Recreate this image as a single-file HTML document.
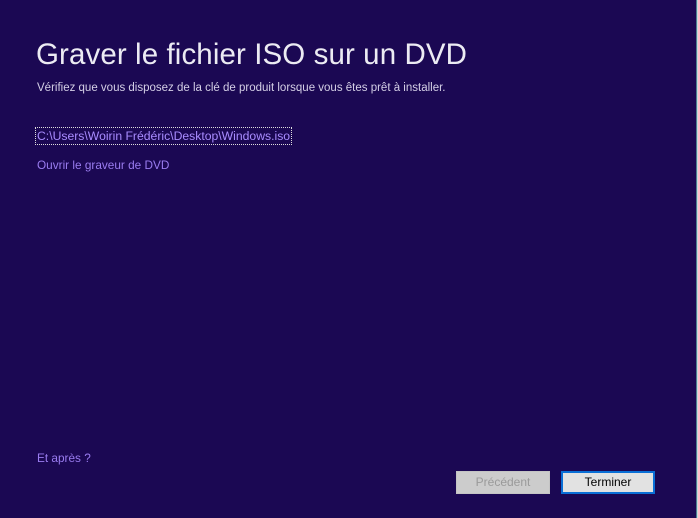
<!DOCTYPE html>
<html><head><meta charset="utf-8"><style>
body{margin:0;width:698px;height:518px;background:#1b0853;position:relative;overflow:hidden;font-family:"Liberation Sans",sans-serif;}
.e{position:absolute;top:0;width:1px;height:518px}
h1{position:absolute;left:36px;top:38px;margin:0;font-weight:300;font-size:29.5px;color:#ecebf3;letter-spacing:0.1px;white-space:nowrap}
.t{position:absolute;white-space:nowrap;font-size:11.8px}
.b{position:absolute;top:471px;width:94px;height:23px;box-sizing:border-box;font-size:12px;text-align:center;line-height:21px}
</style></head><body>
<div class="e" style="left:696px;background:#4a7f8f"></div>
<div class="e" style="left:697px;background:#c8d8dc"></div>
<h1>Graver le fichier ISO sur un DVD</h1>
<div class="t" style="left:37px;top:82px;color:#d4cfe6;font-size:11.5px">Vérifiez que vous disposez de la clé de produit lorsque vous êtes prêt à installer.</div>
<div class="t" style="left:36px;top:128px;color:#a98cff;outline:1px dotted #ddd;padding:1px 1px;font-size:12.2px">C:\Users\Woirin Frédéric\Desktop\Windows.iso</div>
<div class="t" style="left:37px;top:158px;color:#9a7cf0">Ouvrir le graveur de DVD</div>
<div class="t" style="left:37px;top:451px;color:#9a7cf0">Et après ?</div>
<div class="b" style="left:456px;background:#cccccc;color:#9a9a9a;border:1px solid #c4c4c4">Précédent</div>
<div class="b" style="left:561px;background:#e2e2e2;color:#000;border:2px solid #0a6fd6;line-height:19px">Terminer</div>
</body></html>
